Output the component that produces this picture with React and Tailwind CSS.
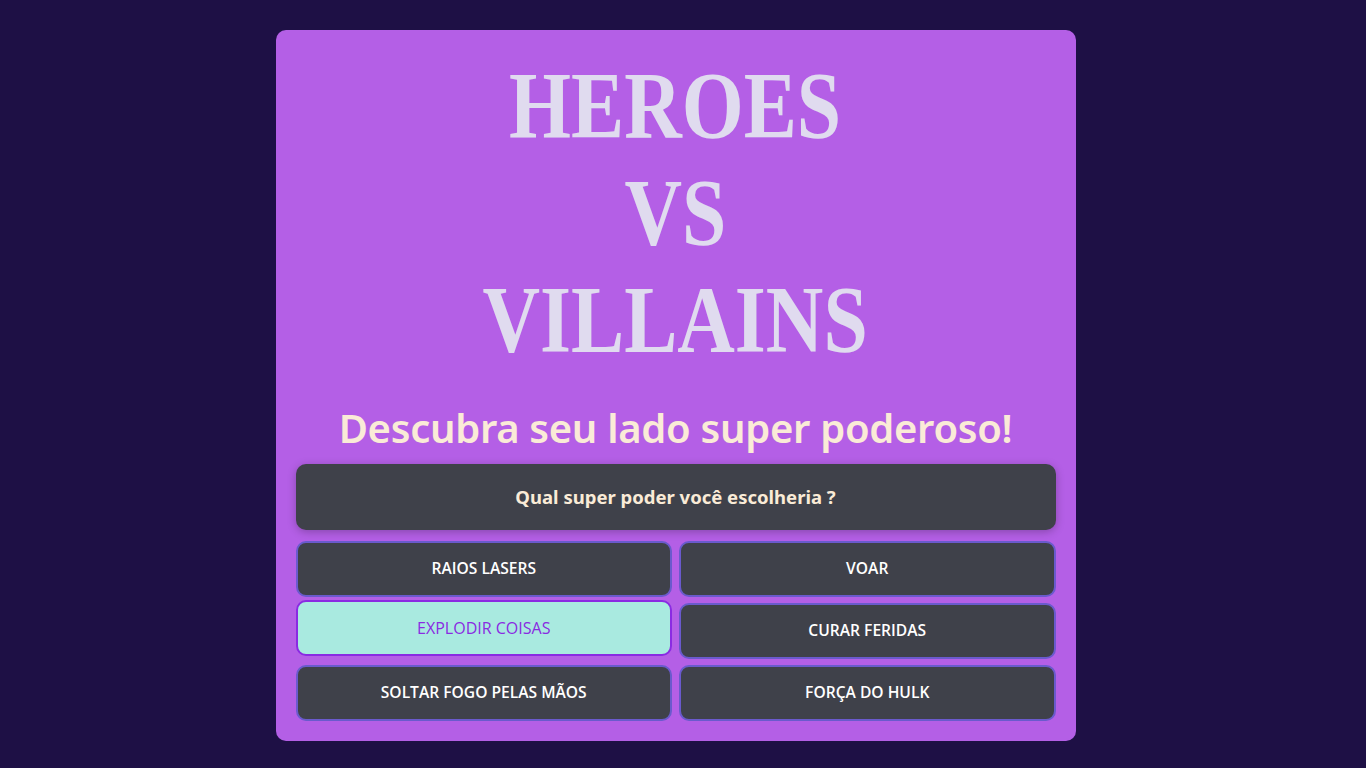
const OPTIONS_LEFT = ["RAIOS LASERS", "EXPLODIR COISAS", "SOLTAR FOGO PELAS MÃOS"];
const OPTIONS_RIGHT = ["VOAR", "CURAR FERIDAS", "FORÇA DO HULK"];

function Option({ label, selected, className = "" }) {
  return (
    <button
      className={`w-full h-[56px] rounded-[10px] border-2 font-['Open_Sans',sans-serif] ${
        selected
          ? "bg-[#a9eae0] border-[#8a2be2] text-[#8a2be2] text-[16px] font-normal"
          : "bg-[#3f414a] border-[#6a5acd] text-white text-[15.6px] font-semibold"
      } ${className}`}
    >
      {label}
    </button>
  );
}

export default function App() {
  return (
    <div className="min-h-[772px] bg-[#1e1045] pt-[30px] pb-[30px] pr-[15px]">
      <div className="mx-auto w-[800px] rounded-[10px] bg-[#b45fe6] px-5 pb-5">
        <h1 className="flex flex-col items-center pt-[22px] font-['Liberation_Serif',serif] text-[96px] font-bold leading-[107px] text-[#e0dbef]">
          <span className="scale-x-[0.83]">HEROES</span>
          <span className="scale-x-[0.83]">VS</span>
          <span className="scale-x-[0.83]">VILLAINS</span>
        </h1>
        <p className="mt-[27px] text-center font-['Noto_Sans',sans-serif] text-[40px] leading-[56px] font-semibold tracking-[-0.3px] text-[#faebd7]">
          Descubra seu lado super poderoso!
        </p>
        <div className="mt-[8px] flex h-[66px] items-center justify-center rounded-[10px] bg-[#3f414a] font-['Noto_Sans',sans-serif] text-[18.5px] font-bold text-[#faebd7] shadow-[0_2px_8px_rgba(0,0,0,0.25)]">
          Qual super poder você escolheria ?
        </div>
        <div className="mt-[11px] grid grid-cols-2 gap-x-[7px]">
          <div className="flex flex-col">
            <Option label={OPTIONS_LEFT[0]} />
            <Option label={OPTIONS_LEFT[1]} selected className="mt-[3px]" />
            <Option label={OPTIONS_LEFT[2]} className="mt-[9px]" />
          </div>
          <div className="flex flex-col">
            <Option label={OPTIONS_RIGHT[0]} />
            <Option label={OPTIONS_RIGHT[1]} className="mt-[6px]" />
            <Option label={OPTIONS_RIGHT[2]} className="mt-[6px]" />
          </div>
        </div>
      </div>
    </div>
  );
}
